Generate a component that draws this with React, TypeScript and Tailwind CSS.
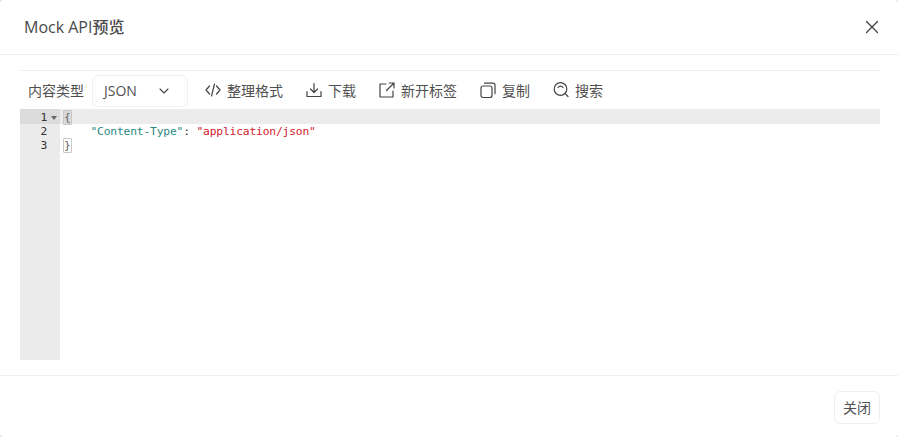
import React from "react";

const sans = "font-['Open_Sans','Noto_Sans_CJK_SC',sans-serif]";

function Tool({ icon, label }: { icon: React.ReactNode; label: string }) {
  return (
    <div className="flex items-center gap-[6px] text-[14px] text-[#505050]">
      {icon}
      <span>{label}</span>
    </div>
  );
}

const s = { width: 16, height: 18, viewBox: "0 0 16 18", fill: "none", stroke: "#444", strokeWidth: 1.2, strokeLinecap: "round" as const, strokeLinejoin: "round" as const };

export default function App() {
  return (
    <div className="h-[437px] w-[898px] overflow-hidden bg-[#e4e4e4]">
      <div className={`flex h-full w-full flex-col rounded-[4px] bg-white ${sans}`}>
        <div className="flex h-[55px] shrink-0 items-center justify-between border-b border-[#efefef] pl-[24px] pr-[19px]">
          <span className="text-[16px] font-medium text-[#4a4a4a]">Mock API预览</span>
          <svg width="14" height="14" viewBox="0 0 14 14" fill="none" stroke="#3f3f3f" strokeWidth="1.3" strokeLinecap="round">
            <path d="M1.5 1.5 12.5 12.5M12.5 1.5 1.5 12.5" />
          </svg>
        </div>
        <div className="flex min-h-0 flex-1 flex-col pl-[20px] pr-[18px] pt-[15px]">
          <div className="flex h-[39px] shrink-0 items-center border-t border-[#efefef] pl-[8px] pt-[2px]">
            <span className="-mt-[2px] text-[14px] text-[#505050]">内容类型</span>
            <div className="ml-[8px] flex h-[32px] w-[96px] items-center justify-between rounded-[6px] border border-[#f0f0f0] pb-[1px] pl-[11px] pr-[18px] text-[14px] text-[#505050]">
              <span>JSON</span>
              <svg width="10" height="6" viewBox="0 0 10 6" fill="none" stroke="#444" strokeWidth="1.1" strokeLinecap="round" strokeLinejoin="round">
                <path d="M1 1l4 4 4-4" />
              </svg>
            </div>
            <div className="-mt-[2px] ml-[17px] flex items-center gap-[23px]">
              <Tool label="整理格式" icon={<svg {...s}><path d="M4.5 5 1 9l3.5 4M11.5 5 15 9l-3.5 4M9.5 3 6.5 15" /></svg>} />
              <Tool label="下载" icon={<svg {...s}><path d="M8 2.5v9M4.5 8 8 11.5 11.5 8M1 10.5V15.5H15V10.5" /></svg>} />
              <Tool label="新开标签" icon={<svg {...s}><path d="M7 3H1v13h13v-6M10 2h5v5M15 2 7.5 9.5" /></svg>} />
              <Tool label="复制" icon={<svg {...s}><rect x="1" y="5" width="11" height="11.5" rx="2" /><path d="M4.5 2.2h8.5a2 2 0 0 1 2 2v8.5" /></svg>} />
              <Tool label="搜索" icon={<svg {...s}><circle cx="7.5" cy="8" r="6.3" /><path d="M12.2 12.6 15 15.5M5 6.5a3 3 0 0 1 5 0" /></svg>} />
            </div>
          </div>
          <div className="flex h-[251px] shrink-0 font-['DejaVu_Sans_Mono',monospace] text-[11.3px] leading-[14px] tracking-[-0.18px]">
            <div className="w-[40px] shrink-0 bg-[#ebebeb] text-[#333]">
              <div className="flex h-[15px] items-start bg-[#dcdcdc] pt-[2px]">
                <span className="w-[27px] text-right">1</span>
                <svg className="ml-[4px] mt-[5px]" width="6" height="4" viewBox="0 0 6 4"><path d="M0 0h6L3 4z" fill="#666" /></svg>
              </div>
              <div className="mt-px h-[14px] w-[27px] text-right">2</div>
              <div className="h-[14px] w-[27px] text-right">3</div>
            </div>
            <div className="min-w-0 flex-1 text-[#333]">
              <div className="h-[15px] bg-[#ececec] pl-[3px] pt-[2px]"><span className="rounded-[1px] border border-[#c8c8c8] bg-[#dadada] text-[#666]">{"{"}</span></div>
              <div className="mt-px h-[14px] whitespace-pre pl-[4px]">{"    "}<span className="text-[#2a8a84]">"Content-Type"</span>: <span className="text-[#d3202c]">"application/json"</span></div>
              <div className="h-[14px] pl-[3px]"><span className="rounded-[1px] border border-[#c8c8c8] text-[#666]">{"}"}</span></div>
            </div>
          </div>
        </div>
        <div className="flex h-[62px] shrink-0 items-start justify-end border-t border-[#efefef] px-[18px] pt-[15px]">
          <button className="h-[33px] w-[46px] rounded-[6px] border border-[#efefef] text-[14px] text-[#505050]">关闭</button>
        </div>
      </div>
    </div>
  );
}
